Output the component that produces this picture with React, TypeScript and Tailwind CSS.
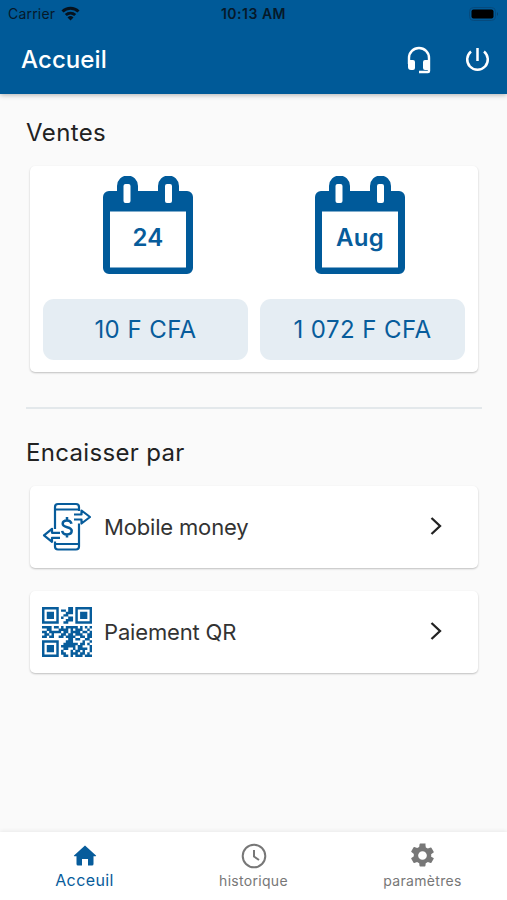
import React from "react";

const qrRows = [
  "111111100001101111111",
  "100000101101101000001",
  "101110100011101011101",
  "101110100110001011101",
  "101110101001101011101",
  "100000100011101000001",
  "111111100110001111111",
  "000000000000000000000",
  "111101101011111010101",
  "001100011110101110010",
  "110111110110111101101",
  "011010001101101110011",
  "110110011011110011011",
  "000000000001101100110",
  "111111100011100001001",
  "100000100111111011010",
  "101110101111110110001",
  "101110100110010111101",
  "101110101000101101001",
  "100000101100111011010",
  "111111100110101110111",
];

const qrPath = qrRows
  .map((row, y) =>
    row
      .split("")
      .map((v, x) => (v === "1" ? `M${x} ${y}h1.04v1.04h-1.04z` : ""))
      .join(""),
  )
  .join("");

function Qr() {
  return (
    <svg className="h-[50px] w-[50px] shrink-0" viewBox="0 0 21 21">
      <path d={qrPath} fill="#075c9b" />
    </svg>
  );
}

function MobileMoney() {
  return (
    <svg
      className="h-[50px] w-[50px] shrink-0"
      viewBox="0 0 50 50"
      fill="none"
      stroke="#075c9b"
      strokeWidth="2.2"
      strokeLinejoin="round"
    >
      <path d="M13 27V5a3 3 0 0 1 3-3h18a3 3 0 0 1 3 3v4M37 21.500v23a3 3 0 0 1-3 3H16a3 3 0 0 1-3-3v-5M13 7.500h24M13 42h24" />
      <path d="M32 12.500h7.500v-4l8.500 6.500-8.500 6.500v-4H32M18 35.800h-8v4l-8-6.500 8-6.500v4h8" />
      <path d="M29.500 21.800c-.5-2-2-3.300-4.500-3.300-2.600 0-4.300 1.300-4.300 3.300 0 4.700 9 2.200 9 7 0 2.200-1.900 3.600-4.700 3.600-2.700 0-4.500-1.400-4.800-3.600M25 15v3.500M25 32.400v3.200" strokeWidth="2.500" />
    </svg>
  );
}

function Stat({ label, amount, shift }: { label: string; amount: string; shift: string }) {
  return (
    <div className="flex w-[205px] flex-col items-center">
      <div className={`grid h-[98px] w-[95px] ${shift}`}>
        <svg className="col-start-1 row-start-1" width="90" height="98" viewBox="0 0 90 98">
          <path
            fill="#005a9a"
            fillRule="evenodd"
            d="M6 15h8V10a10 10 0 0 1 21 0v5h20V10a10 10 0 0 1 21 0v5h8a6 6 0 0 1 6 6v71a6 6 0 0 1-6 6H6a6 6 0 0 1-6-6V21a6 6 0 0 1 6-6ZM7 35.500v56h76v-56ZM22.500 8a2 2 0 0 0-2 2v15a2 2 0 0 0 2 2h3a2 2 0 0 0 2-2V10a2 2 0 0 0-2-2ZM64 8a2 2 0 0 0-2 2v15a2 2 0 0 0 2 2h3a2 2 0 0 0 2-2V10a2 2 0 0 0-2-2Z"
          />
        </svg>
        <span className="col-start-1 row-start-1 w-[90px] self-center pt-[26px] text-center text-[24px] leading-[24px] font-semibold tracking-[0.3px]">
          {label}
        </span>
      </div>
      <div className="mt-[25px] flex h-[61px] w-full items-center justify-center rounded-[11px] bg-[#e5edf3] text-[24px] tracking-[0.45px]">
        {amount}
      </div>
    </div>
  );
}

function PayRow({ icon, label }: { icon: React.ReactNode; label: string }) {
  return (
    <div className="flex h-[82px] items-center rounded-[5px] bg-white pr-[35px] pl-3 shadow-[0_1px_2px_rgba(0,0,0,0.24)]">
      {icon}
      <span className="ml-3 flex-1 text-[22px] tracking-[-0.17px] text-[#333]">{label}</span>
      <svg className="mb-[2px]" width="14" height="20" viewBox="0 0 14 20" fill="none" stroke="#222" strokeWidth="2.3">
        <path d="M2.500 2 11 10l-8.500 8" />
      </svg>
    </div>
  );
}

export default function App() {
  return (
    <div className="flex h-[900px] w-[507px] flex-col overflow-hidden bg-[#fafafa] font-['Inter',sans-serif] text-[#222]">
      <header className="z-10 h-[94px] shrink-0 bg-[#005a98] shadow-[0_1px_5px_rgba(0,0,0,0.3)]">
        <div className="grid h-[27px] grid-cols-3 items-center px-[8px] text-[14px] text-[#06192a]">
          <div className="flex items-center gap-[6px]">
            <span className="tracking-[0.2px]">Carrier</span>
            <svg width="19" height="15" viewBox="0 0 19 15" fill="none" stroke="#06121d" strokeWidth="3">
              <path d="M1.500 5.500a11.500 11.500 0 0 1 16 0M4.800 9a7 7 0 0 1 9.400 0" />
              <path d="M9.500 14.500 6.500 11.500a4.300 4.300 0 0 1 6 0Z" fill="#06121d" stroke="none" />
            </svg>
          </div>
          <span className="text-center font-semibold tracking-[0.5px]">10:13 AM</span>
          <svg className="justify-self-end" width="30" height="14" viewBox="0 0 30 14">
            <rect x="0.5" y="0.5" width="26" height="13" rx="4" fill="none" stroke="#064a7d" />
            <rect x="2.5" y="2.5" width="22" height="9" rx="2" fill="#000" />
            <path d="M28 5v4q2-2 0-4" fill="#06416d" />
          </svg>
        </div>
        <div className="flex h-[66px] items-center pr-[17px] pl-[21px] text-white">
          <h1 className="flex-1 text-[24px] font-medium tracking-[0.1px]">Accueil</h1>
          <svg width="24" height="28" viewBox="0 0 24 28">
            <path d="M2 18v-6a10 10 0 0 1 20 0v13q0 1-1 1h-9" fill="none" stroke="white" strokeWidth="2.4" />
            <path d="M1 14h5q2 0 2 2v6q0 2-2 2H4q-3 0-3-3ZM23 14h-5q-2 0-2 2v6q0 2 2 2h5Z" fill="white" />
          </svg>
          <svg className="mb-[2px] ml-[34px]" width="25" height="25" viewBox="0 0 25 25" fill="none" stroke="white" strokeWidth="2.5">
            <path d="M12.500 1v13M6 4.500a10.300 10.300 0 1 0 13 0" />
          </svg>
        </div>
      </header>
      <main className="flex-1 pt-[23px] pr-[25px] pl-[26px]">
        <h2 className="text-[24px] leading-[32px] tracking-[0.4px]">Ventes</h2>
        <section className="mx-1 mt-[17px] flex h-[206px] justify-between rounded-[5px] bg-white px-[13px] pt-[10px] text-[#075c9b] shadow-[0_1px_2px_rgba(0,0,0,0.24)]">
          <Stat label="24" amount="10 F CFA" shift="pl-[5px]" />
          <Stat label="Aug" amount="1 072 F CFA" shift="pr-[5px]" />
        </section>
        <hr className="mt-[35px] border-t-2 border-[#e3e8eb]" />
        <h2 className="mt-7 text-[24px] leading-[32px] tracking-[0.33px]">Encaisser par</h2>
        <div className="mx-1 mt-[17px] flex flex-col gap-[23px]">
          <PayRow icon={<MobileMoney />} label="Mobile money" />
          <PayRow icon={<Qr />} label="Paiement QR" />
        </div>
      </main>
      <nav className="grid h-[68px] shrink-0 grid-cols-3 bg-white text-[14px] text-[#777] shadow-[0_-1px_4px_rgba(0,0,0,0.07)]">
        <div className="flex flex-col items-center pt-3 text-[#075c9b]">
          <svg width="24" height="24" viewBox="0 0 24 24" fill="currentColor">
            <path d="M12 1.500 1 11.500q-.5.700.5.700H3.500V20q0 1.500 1.500 1.500h4V15h6v6.500h4q1.500 0 1.500-1.500v-7.800h2q1 0 .5-.7Z" />
          </svg>
          <span className="mt-px text-[16px] leading-[22px] tracking-[0.4px]">Acceuil</span>
        </div>
        <div className="flex flex-col items-center pt-[11px]">
          <svg width="26" height="26" viewBox="0 0 26 26" fill="none" stroke="currentColor" strokeWidth="2">
            <circle cx="13" cy="13" r="11.3" />
            <path d="M13 7v6.500l5 3.500" />
          </svg>
          <span className="mt-[2px] leading-[20px] tracking-[0.3px]">historique</span>
        </div>
        <div className="flex flex-col items-center pt-[9px]">
          <svg width="29" height="29" viewBox="0 0 24 24" fill="currentColor">
            <path d="M19.140 12.940c.04-.3.060-.61.060-.94s-.02-.64-.07-.94l2.030-1.580a.49.49 0 0 0 .12-.61l-1.920-3.320a.49.49 0 0 0-.59-.22l-2.390.96a7 7 0 0 0-1.620-.94l-.36-2.540A.48.48 0 0 0 13.920 2h-3.840a.48.48 0 0 0-.48.410l-.36 2.540c-.59.240-1.130.570-1.620.940l-2.390-.960a.48.48 0 0 0-.59.220L2.720 8.470a.48.48 0 0 0 .12.610l2.030 1.580c-.05.300-.09.630-.09.940s.020.640.070.940l-2.030 1.580a.49.49 0 0 0-.12.610l1.920 3.320c.12.220.370.290.590.220l2.390-.960c.5.380 1.030.700 1.620.940l.36 2.540c.05.240.240.410.480.410h3.840c.24 0 .44-.17.480-.410l.36-2.540a7 7 0 0 0 1.620-.94l2.390.96c.22.080.470 0 .59-.22l1.920-3.320a.48.48 0 0 0-.12-.61ZM12 15.600a3.600 3.600 0 1 1 0-7.200 3.600 3.600 0 0 1 0 7.200Z" />
          </svg>
          <span className="mt-[1px] leading-[20px] tracking-[0.3px]">paramètres</span>
        </div>
      </nav>
    </div>
  );
}
